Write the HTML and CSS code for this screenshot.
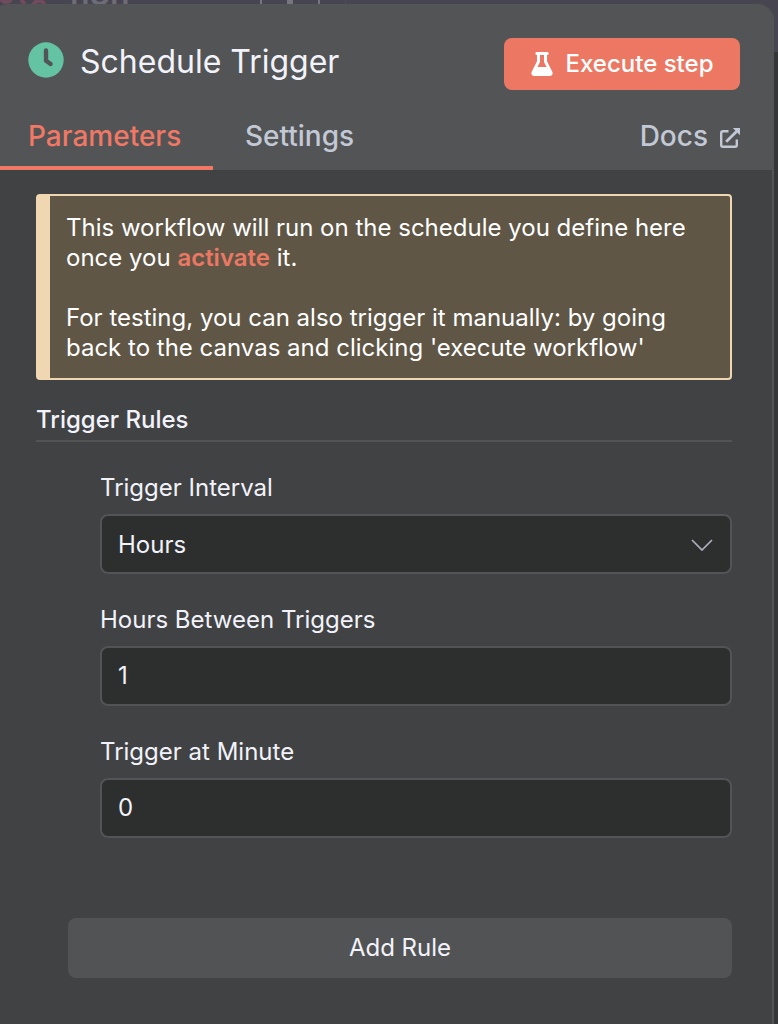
FILE: index.html
```html
<!DOCTYPE html>
<html lang="en">
<head>
<meta charset="utf-8">
<title>Schedule Trigger</title>
<link rel="stylesheet" href="styles.css">
</head>
<body>
<div class="backdrop" aria-hidden="true">
  <svg class="backdrop-art" width="360" height="4" viewBox="0 0 360 4">
    <g fill="none" stroke="#704b5e" stroke-width="4"><circle cx="6" cy="-4" r="6"/><circle cx="39" cy="7" r="6"/><path d="M21 0l4 4"/></g>
    <path d="M260 0h2v4h-2zM318 0h2v4h-2z" fill="#77767f"/><path d="M287 0h6v4h-6z" fill="#77767f"/><path d="M345 0h1v4h-1z" fill="#4d4b55"/>
  </svg>
  <span class="backdrop-name">n8n</span>
</div>
<main class="panel">
  <header class="header">
    <div class="title-row">
      <svg class="clock" width="36" height="36" viewBox="0 0 36 36"><circle cx="18" cy="18" r="17.7" fill="#64c3a2"/><path d="M18 8.500v10.200l4.600 3.300" fill="none" stroke="#525455" stroke-width="4.400" stroke-linecap="round" stroke-linejoin="round"/></svg>
      <h1 class="title">Schedule Trigger</h1>
      <button class="execute">
        <svg width="22" height="24" viewBox="0 0 22 24"><path fill="#fff" fill-rule="evenodd" d="M5.500 0h11a1 1 0 0 1 1 1v1a1 1 0 0 1-1 1H16v6.300l5.200 10.200c1.100 2.400 0 4.500-2.400 4.500H3.200C.8 24-.3 21.900.8 19.500L6 9.300V3h-.5a1 1 0 0 1-1-1V1a1 1 0 0 1 1-1zM9 3v7l-2.600 5h9.200L13 10V3z"/></svg>
        <span>Execute step</span>
      </button>
    </div>
    <nav class="tabs">
      <a class="tab tab-active">Parameters</a>
      <a class="tab">Settings</a>
      <a class="tab docs">Docs
        <svg width="20" height="20" viewBox="0 0 20 20" fill="none" stroke="#c3c8d5" stroke-width="2.400"><path d="M8.500 3.200H3Q1.200 3.200 1.200 5V17Q1.200 18.800 3 18.800H15Q16.800 18.800 16.800 17V11.500"/><path d="M6.200 13.800L17 3" stroke-width="2.800"/><path d="M12.800 0H20V7.200z" fill="#c3c8d5" stroke="none"/></svg>
      </a>
    </nav>
  </header>
  <section class="content">
    <div class="notice">This workflow will run on the schedule you define here<br>once you <a class="activate">activate</a> it.<br><br>For testing, you can also trigger it manually: by going<br>back to the canvas and clicking 'execute workflow'</div>
    <h2 class="section-title">Trigger Rules</h2>
    <div class="fields">
      <div class="field">
        <div class="label">Trigger Interval</div>
        <div class="input"><span>Hours</span><svg class="chevron" width="22" height="12" viewBox="0 0 22 12"><path d="M1 1L11 11L21 1" fill="none" stroke="#adb0bd" stroke-width="1.700"/></svg></div>
      </div>
      <div class="field">
        <div class="label">Hours Between Triggers</div>
        <div class="input number"><span>1</span></div>
      </div>
      <div class="field">
        <div class="label">Trigger at Minute</div>
        <div class="input number"><span>0</span></div>
      </div>
    </div>
    <button class="add-rule">Add Rule</button>
  </section>
</main>
</body>
</html>
```
FILE: styles.css
```css
* { box-sizing: border-box; }
body {
  margin: 0;
  height: 1024px;
  overflow: hidden;
  background: linear-gradient(#474550 52px, #353638 52px);
  font-family: Inter, "Liberation Sans", sans-serif;
  font-size: 24px;
  color: #f2f3fa;
}
.backdrop {
  position: absolute;
  inset: 0 0 auto 0;
  height: 24px;
  overflow: hidden;
}
.backdrop-art { display: block; }
.backdrop-name {
  position: absolute;
  left: 70px;
  top: -26px;
  font-size: 32px;
  line-height: 40px;
  font-weight: 600;
  color: #6d6c76;
}
.panel {
  position: relative;
  width: 782px;
  height: 1036px;
  margin: 4px 0 0 -8px;
  border: solid #525455;
  border-width: 0 2px 0 0;
  border-radius: 16px;
  background: #414244;
  overflow: hidden;
}
.header {
  height: 166px;
  padding-left: 8px;
  background: #525455;
}
.title-row {
  display: flex;
  align-items: center;
  height: 86px;
  padding: 34px 32px 0 28px;
}
.clock { margin-top: -8px; }
.title {
  margin: -4px auto 0 16px;
  font-size: 32px;
  line-height: 40px;
  font-weight: 400;
}
.execute {
  display: flex;
  align-items: center;
  justify-content: center;
  gap: 13px;
  width: 236px;
  height: 52px;
  padding: 0;
  border: 0;
  border-radius: 8px;
  background: #ec7864;
  color: #fff;
  font: 500 24px/30px Inter, sans-serif;
}
.tabs {
  display: flex;
  height: 80px;
  padding-right: 32px;
  font-size: 28px;
  font-weight: 500;
  line-height: 34px;
  color: #c3c8d5;
}
.tab { padding: 29px 32px 0 32px; }
.tab-active {
  width: 213px;
  padding: 29px 0 0 28px;
  border-bottom: 4px solid #f07865;
  color: #f07865;
}
.docs {
  display: flex;
  align-items: flex-start;
  gap: 12px;
  margin-left: auto;
  padding-right: 0;
}
.docs svg { margin-top: 9px; }
.content { padding: 24px 40px 0 44px; }
.notice {
  height: 186px;
  padding: 17px 14px 17px 16px;
  border: 2px solid #eed7b1;
  border-left-width: 14px;
  border-radius: 4px;
  background: #5f5646;
  line-height: 30px;
  color: #fff;
  white-space: nowrap;
}
.activate { font-weight: 600; color: #ec7864; }
.section-title {
  height: 36px;
  margin: 26px 0 0;
  border-bottom: 2px solid #525455;
  font-size: 24px;
  font-weight: 500;
  line-height: 28px;
}
.fields {
  display: grid;
  gap: 30px;
  padding: 30px 0 0 64px;
}
.label {
  height: 42px;
  line-height: 32px;
}
.input {
  display: flex;
  align-items: center;
  justify-content: space-between;
  height: 60px;
  padding: 0 17px 0 16px;
  border: 2px solid #525455;
  border-radius: 8px;
  background: #2d2f2e;
}
.number { padding-bottom: 2px; }
.chevron { margin-top: 1px; }
.add-rule {
  display: block;
  width: 664px;
  height: 60px;
  margin: 80px 0 0 32px;
  padding: 0;
  border: 0;
  border-radius: 8px;
  background: #525355;
  color: #f2f3fa;
  font: 400 24px/30px Inter, sans-serif;
}
```
